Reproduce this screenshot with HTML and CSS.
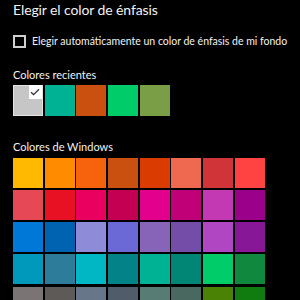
FILE: index.html
```html
<!DOCTYPE html>
<html lang="es">
<head>
<meta charset="utf-8">
<link rel="stylesheet" href="styles.css">
</head>
<body>
<div class="page">
  <h1 class="title">Elegir el color de énfasis</h1>
  <label class="check-row">
    <span class="checkbox"></span>
    <span class="check-label">Elegir automáticamente un color de énfasis de mi fondo</span>
  </label>
  <h2 class="section">Colores recientes</h2>
  <div class="recent">
    <div class="tile selected" style="background:#c6c6c6">
      <span class="tick"><svg width="10" height="8" viewBox="0 0 10 8"><path d="M1 4.2 L3.6 6.6 L9 1.2" fill="none" stroke="#333" stroke-width="1.3"/></svg></span>
    </div>
    <div class="tile" style="background:#00b294"></div>
    <div class="tile" style="background:#ca5010"></div>
    <div class="tile" style="background:#00cc6a"></div>
    <div class="tile" style="background:#7a9e46"></div>
  </div>
  <h2 class="section section-win">Colores de Windows</h2>
  <div class="grid">
    <div class="tile" style="background:#ffb900"></div>
    <div class="tile" style="background:#ff8c00"></div>
    <div class="tile" style="background:#f7630c"></div>
    <div class="tile" style="background:#ca5010"></div>
    <div class="tile" style="background:#da3b01"></div>
    <div class="tile" style="background:#ef6950"></div>
    <div class="tile" style="background:#d13438"></div>
    <div class="tile" style="background:#ff4343"></div>
    <div class="tile" style="background:#e74856"></div>
    <div class="tile" style="background:#e81123"></div>
    <div class="tile" style="background:#ea005e"></div>
    <div class="tile" style="background:#c30052"></div>
    <div class="tile" style="background:#e3008c"></div>
    <div class="tile" style="background:#bf0077"></div>
    <div class="tile" style="background:#c239b3"></div>
    <div class="tile" style="background:#9a0089"></div>
    <div class="tile" style="background:#0078d7"></div>
    <div class="tile" style="background:#0063b1"></div>
    <div class="tile" style="background:#8e8cd8"></div>
    <div class="tile" style="background:#6b69d6"></div>
    <div class="tile" style="background:#8764b8"></div>
    <div class="tile" style="background:#744da9"></div>
    <div class="tile" style="background:#b146c2"></div>
    <div class="tile" style="background:#881798"></div>
    <div class="tile" style="background:#0099bc"></div>
    <div class="tile" style="background:#2d7d9a"></div>
    <div class="tile" style="background:#00b7c3"></div>
    <div class="tile" style="background:#038387"></div>
    <div class="tile" style="background:#00b294"></div>
    <div class="tile" style="background:#018574"></div>
    <div class="tile" style="background:#00cc6a"></div>
    <div class="tile" style="background:#10893e"></div>
    <div class="tile" style="background:#7a7574"></div>
    <div class="tile" style="background:#5d5a58"></div>
    <div class="tile" style="background:#68768a"></div>
    <div class="tile" style="background:#515c6b"></div>
    <div class="tile" style="background:#567c73"></div>
    <div class="tile" style="background:#486860"></div>
    <div class="tile" style="background:#498205"></div>
    <div class="tile" style="background:#107c10"></div>
  </div>
</div>
</body>
</html>
```
FILE: styles.css
```css
html, body {
  margin: 0;
  padding: 0;
  background: #000;
  overflow: hidden;
}
.page {
  width: 300px;
  height: 300px;
  overflow: hidden;
  padding: 0 0 0 13px;
  box-sizing: border-box;
  font-family: "Lato", "Noto Sans", sans-serif;
  color: #fff;
}
.title {
  margin: 0;
  font-size: 14px;
  font-weight: 400;
  letter-spacing: -0.1px;
  line-height: 19px;
  height: 19px;
  color: #f2f2f2;
}
.check-row {
  display: flex;
  align-items: center;
  gap: 6px;
  margin-top: 16px;
  height: 13px;
}
.checkbox {
  width: 13px;
  height: 13px;
  box-sizing: border-box;
  border: 2px solid #cfcfcf;
  flex: none;
}
.check-label {
  font-size: 10.5px;
  line-height: 13px;
  color: #f2f2f2;
  white-space: nowrap;
}
.section {
  margin: 0;
  margin-top: 20px;
  font-size: 11px;
  font-weight: 400;
  line-height: 14px;
  height: 14px;
  color: #f2f2f2;
}
.section-win {
  margin-top: 24px;
}
.recent {
  display: flex;
  gap: 1.67px;
  margin-top: 3px;
}
.grid {
  display: grid;
  grid-template-columns: repeat(8, 30px);
  grid-auto-rows: 30px;
  column-gap: 1.67px;
  row-gap: 2.3px;
  margin-top: 4px;
}
.tile {
  width: 30px;
  height: 30px;
  position: relative;
}
.recent .tile {
  height: 30.5px;
}
.tile.selected {
  box-sizing: border-box;
  border: 1.5px solid #e4e4e4;
}
.tick {
  position: absolute;
  top: -1.5px;
  right: 0;
  width: 13.5px;
  height: 14.5px;
  background: #fff;
  display: flex;
  align-items: center;
  justify-content: center;
}
```
